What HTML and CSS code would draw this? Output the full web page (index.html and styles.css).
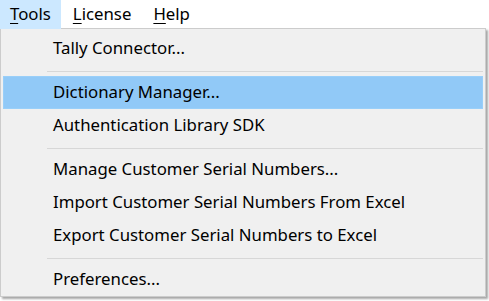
FILE: index.html
```html
<!DOCTYPE html>
<html lang="en">

<head>
    <meta charset="UTF-8">
    <title>Tools menu</title>
    <link rel="stylesheet" href="styles.css">
</head>

<body>
    <div class="menubar">
        <div class="menubar-item open"><u>T</u>ools</div>
        <div class="menubar-item"><u>L</u>icense</div>
        <div class="menubar-item"><u>H</u>elp</div>
    </div>
    <div class="dropdown">
        <div class="item">Tally Connector...</div>
        <div class="separator"></div>
        <div class="item active">Dictionary Manager...</div>
        <div class="item">Authentication Library SDK</div>
        <div class="separator"></div>
        <div class="item">Manage Customer Serial Numbers...</div>
        <div class="item">Import Customer Serial Numbers From Excel</div>
        <div class="item">Export Customer Serial Numbers to Excel</div>
        <div class="separator"></div>
        <div class="item">Preferences...</div>
    </div>
</body>

</html>
```

FILE: styles.css
```css
body {
    margin: 0;
    background: #ffffff;
    font-family: "Noto Sans", "Open Sans", sans-serif;
    font-size: 16.8px;
    color: #000000;
    width: 489px;
    height: 301px;
    overflow: hidden;
}

.menubar {
    display: flex;
    height: 28px;
}

.menubar-item {
    height: 27px;
    line-height: 26px;
    padding: 0 9px;
    border: 1px solid transparent;
    margin-right: 2px;
}

.menubar-item.open {
    background: #cce8ff;
    border-color: #cce8ff;
}

.menubar-item u {
    text-underline-offset: 3px;
}

.dropdown {
    width: 486px;
    height: 269px;
    box-sizing: border-box;
    background: #f0f0f0;
    border: 1px solid #cccccc;
    box-shadow: 2px 2px 2px rgba(0, 0, 0, 0.35);
    padding: 3px 2px;
}

.item {
    height: 33px;
    line-height: 32px;
    padding-left: 50px;
    box-sizing: border-box;
    white-space: nowrap;
}

.item.active {
    background: #91c9f7;
    border: 1px solid #99cff9;
    line-height: 30px;
    padding-left: 49px;
}

.separator {
    height: 11px;
    display: flex;
    align-items: center;
    padding-left: 44px;
}

.separator::after {
    content: "";
    flex: 1;
    height: 1px;
    margin-top: 1px;
    background: #d7d7d7;
}
```
